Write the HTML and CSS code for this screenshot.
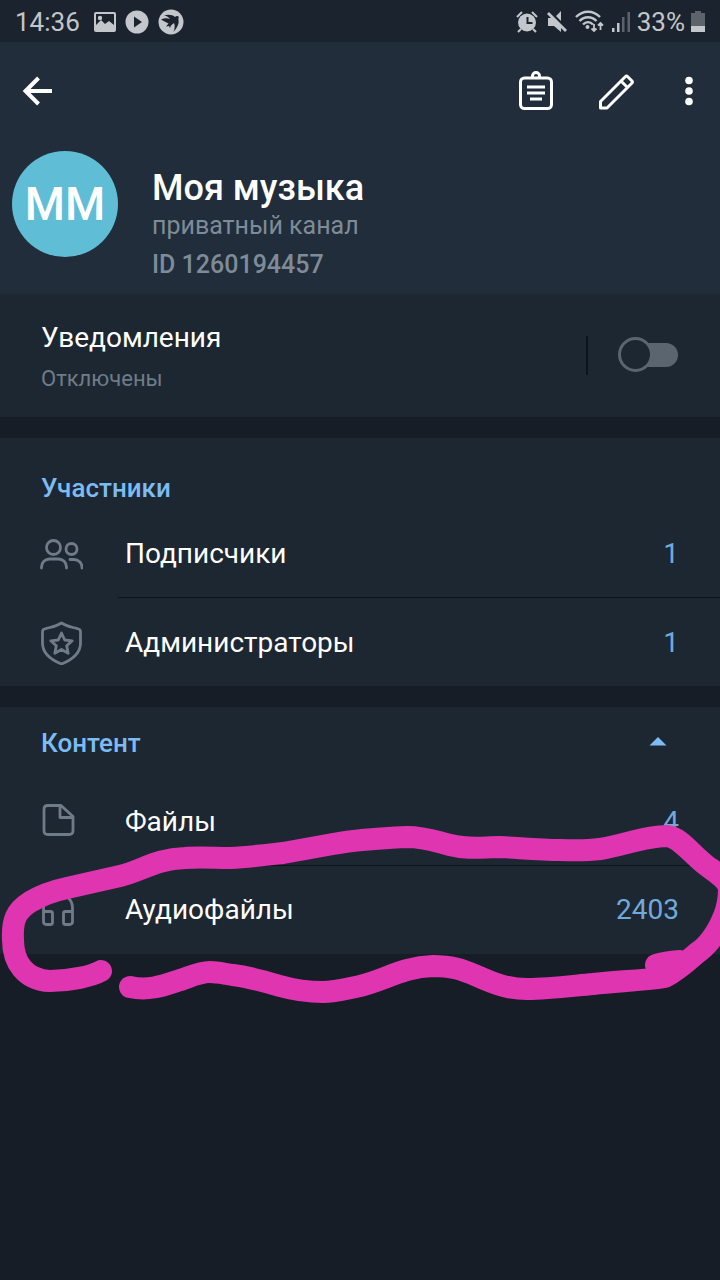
FILE: index.html
```html
<!DOCTYPE html>
<html lang="ru">
<head>
<meta charset="utf-8">
<meta name="viewport" content="width=device-width, initial-scale=1">
<title>Моя музыка</title>
<link rel="stylesheet" href="styles.css">
</head>
<body>
<div class="status">
  <span class="status-text">14:36</span>
  <svg class="status-photo" width="22" height="22" viewBox="0 0 22 22" aria-hidden="true"><rect x="1" y="2" width="20" height="18" rx="1" fill="none" stroke="currentColor" stroke-width="2"/><circle cx="6" cy="7" r="2.200" fill="currentColor"/><path d="M2 18v-4l5-5 4 4 4-3 5 4v5H2z" fill="currentColor"/></svg>
  <svg width="24" height="24" viewBox="0 0 24 24" aria-hidden="true"><path fill="currentColor" fill-rule="evenodd" d="M12 .5a11.500 11.500 0 1 1 0 23 11.500 11.500 0 0 1 0-23zM9 6.500v11l8-5.500z"/></svg>
  <svg width="26" height="26" viewBox="0 0 26 26" aria-hidden="true"><circle cx="13" cy="13" r="12.500" fill="currentColor"/><path class="cutout" d="M3 10.500C7 8.500 10 9 12 10C10.500 8 8 6.500 6 6.500C10 5 15 6 17 8Q19 6 21 8Q20 9 20.500 11C21.500 15 18 20 15.500 23C17 19 17 16 16 14L13 16.500L12 19L11 17L8 17.500L10.500 14.500C8 13 5 12 3 10.500z"/></svg>
  <span class="status-space"></span>
  <div class="status-right">
    <svg width="24" height="24" viewBox="0 0 24 24" aria-hidden="true"><circle cx="12" cy="12.500" r="9" fill="currentColor"/><path d="M2 7l5-5M22 7l-5-5M6 19l-3 3M18 19l3 3" stroke="currentColor" stroke-width="2"/><path class="cut-line" d="M12.500 7v6h5"/></svg>
    <svg width="24" height="24" viewBox="0 0 24 24" aria-hidden="true"><path fill="currentColor" d="M3 8h5l8 8v6l-7-6H3zM11 6l5-5v10z"/><path d="M3 3l18 18" stroke="currentColor" stroke-width="2.800"/></svg>
    <svg width="30" height="24" viewBox="0 0 30 24" aria-hidden="true"><g fill="none" stroke="currentColor" stroke-width="2.400"><path d="M1 7c7-7 17-7 24 0M4.500 11c5-5 12-5 17 0M8 14.500c3-3 7-3 10 0"/><path d="M19 14v7M16.500 18.500L19 21l2.500-2.500M25.500 20v-7M23 15.500l2.500-2.500 2.500 2.500" stroke-width="1.800"/></g><circle cx="12.500" cy="17" r="2" fill="currentColor"/></svg>
    <svg width="20" height="22" viewBox="0 0 20 22" aria-hidden="true"><path fill="currentColor" d="M1 17h2.500v4H1zM6 12h2.500v9H6z"/><path class="dim" d="M11 6h2.500v15H11zM16.500 1H19v20h-2.500z"/></svg>
    <span class="status-text">33%</span>
    <svg width="14" height="24" viewBox="0 0 14 24" aria-hidden="true"><path class="dim" d="M4 1h6v2h4v14H0V3h4z"/><path fill="currentColor" d="M0 16h14v6H0z"/></svg>
  </div>
</div>

<header class="header">
  <nav class="toolbar">
    <button class="tool" type="button" aria-label="Назад"><svg width="40" height="40" viewBox="0 0 40 40"><path d="M34 20H9M20.500 7L7.500 20l13 13" fill="none" stroke="currentColor" stroke-width="4"/></svg></button>
    <span class="status-space"></span>
    <button class="tool" type="button" aria-label="Журнал"><svg width="40" height="40" viewBox="0 0 40 40"><g fill="none" stroke="currentColor" stroke-width="3"><rect x="4.500" y="7" width="31" height="30.500" rx="4"/><path d="M16.500 7V5a3.500 3.500 0 0 1 7 0v2M11 16h18M11 22h18M14 28h12"/></g></svg></button>
    <button class="tool" type="button" aria-label="Изменить"><svg width="40" height="40" viewBox="0 0 40 40"><path d="M4.500 37v-6.500L29.500 5.500q1-1 2 0l4.500 4.500q1 1 0 2L11 37zM25 10l6.500 6.500" fill="none" stroke="currentColor" stroke-width="3" stroke-linejoin="round"/></svg></button>
    <button class="tool menu" type="button" aria-label="Меню"><svg width="10" height="40" viewBox="0 0 10 40"><g fill="currentColor"><circle cx="5" cy="9.500" r="3.800"/><circle cx="5" cy="20" r="3.800"/><circle cx="5" cy="30.500" r="3.800"/></g></svg></button>
  </nav>
  <div class="profile">
    <div class="avatar">ММ</div>
    <div class="who">
      <h1 class="name">Моя музыка</h1>
      <p class="kind">приватный канал</p>
      <p class="ident">ID 1260194457</p>
    </div>
  </div>
</header>

<main>
  <section class="card notify">
    <div class="notify-text">
      <label class="notify-title" for="notify">Уведомления</label>
      <p class="notify-state">Отключены</p>
    </div>
    <div class="toggle">
      <input class="switch" type="checkbox" role="switch" id="notify">
    </div>
  </section>

  <section class="card">
    <h2 class="heading heading-members">Участники</h2>
    <a class="row" href="#subscribers">
      <svg class="row-icon" width="44" height="44" viewBox="0 0 44 44" aria-hidden="true"><g fill="none" stroke="currentColor" stroke-width="2.800" stroke-linecap="round"><circle cx="14.500" cy="16.500" r="7"/><circle cx="32.500" cy="18" r="5.500"/><path d="M2.500 37v-1a8 8 0 0 1 8-8h9a8 8 0 0 1 8 8v1M31 28.500h4a8 8 0 0 1 8 8v.5"/></g></svg>
      <span class="row-body"><span>Подписчики</span><span class="count">1</span></span>
    </a>
    <a class="row" href="#admins">
      <svg class="row-icon" width="44" height="46" viewBox="0 0 44 46" aria-hidden="true"><g fill="none" stroke="currentColor" stroke-width="2.800" stroke-linejoin="round"><path d="M22.500 4c6 4 11 4 17 6q2 .5 2 3v11c0 10-9 17-19 21-10-4-19-11-19-21V13q0-2.500 2-3c6-2 11-2 17-6z"/><path d="M22.500 14l3.200 7 7.500.8-5.500 5 1.500 7.500-6.700-3.800-6.700 3.800 1.500-7.500-5.500-5 7.500-.8z"/></g></svg>
      <span class="row-body"><span>Администраторы</span><span class="count">1</span></span>
    </a>
  </section>

  <section class="card content">
    <button class="fold" type="button" aria-expanded="true"><span class="heading">Контент</span><svg class="caret" width="18" height="10" viewBox="0 0 18 10" aria-hidden="true"><path fill="currentColor" d="M.500 9.500h17L9 1z"/></svg></button>
    <a class="row" href="#files">
      <svg class="row-icon" width="44" height="44" viewBox="0 0 44 44" aria-hidden="true"><path d="M9 6.500h13L34 17.500v14q0 4-4 4H9q-4 0-4-4v-21q0-4 4-4zM21 6.500v12h13" fill="none" stroke="currentColor" stroke-width="2.800" stroke-linejoin="round"/></svg>
      <span class="row-body"><span>Файлы</span><span class="count">4</span></span>
    </a>
    <a class="row" href="#audio">
      <svg class="row-icon" width="44" height="44" viewBox="0 0 44 44" aria-hidden="true"><path d="M4.500 25v-4a14.500 14.500 0 0 1 29 0v4M4.500 24.500h7q2 0 2 2v9q0 2-2 2h-4q-3 0-3-3zM33.500 24.500h-7q-2 0-2 2v9q0 2 2 2h4q3 0 3-3z" fill="none" stroke="currentColor" stroke-width="2.800"/></svg>
      <span class="row-body"><span>Аудиофайлы</span><span class="count">2403</span></span>
    </a>
    <svg class="marker" viewBox="0 820 720 190" preserveAspectRatio="none" aria-hidden="true"><path d="M101 971C92 976 70 981 50 981C25 980 13 962 13 940C12 920 16 911 30 902C40 896 53 891 67 888L120 876C142 871 155 859 185 858C200 857 215 858 230 858C250 857 266 855 283 853L333 844Q360 839 407 837C424 837 434 841 450 845C470 850 483 847 500 847C520 848 540 850 560 850Q585 851 600 849C622 846 645 836 667 836C680 837 692 855 707 866C718 874 728 880 729 889C729 898 728 906 724 916C715 938 706 947 697 953C688 961 677 971 665 977C641 981 617 981 593 984C571 986 549 989 527 989C508 989 495 984 477 976C461 969 451 966 433 966C403 967 385 980 360 986C345 989 336 992 323 992C308 992 294 990 280 986C263 981 250 977 233 975C225 974 218 972 210 972C198 972 188 978 177 981C162 986 148 991 130 987M656 965Q665 962 680 961"/></svg>
  </section>
</main>
</body>
</html>
```
FILE: styles.css
```css
* {
  box-sizing: border-box;
}

body {
  margin: 0;
  min-height: 100vh;
  overflow-x: hidden;
  background: #161d26;
  color: #fff;
  font-family: Roboto, "Noto Sans", sans-serif;
  font-size: 28px;
}

h1, h2, p {
  margin: 0;
}

svg {
  display: block;
  flex: none;
}

button {
  padding: 0;
  border: 0;
  background: none;
  color: inherit;
  font: inherit;
}

.status {
  display: flex;
  align-items: center;
  gap: 9px;
  height: 42px;
  padding: 2px 15px 0 15px;
  background: #1b242e;
  color: #c3c6ca;
}

.status-right {
  display: flex;
  align-items: center;
  gap: 6px;
}

.status-text {
  font-size: 26px;
}

.status-photo {
  margin-left: 5px;
}

.status-space {
  flex: 1;
}

.cutout {
  fill: #1b242e;
}

.cut-line {
  fill: none;
  stroke: #1b242e;
  stroke-width: 2;
}

.dim {
  fill: #5c636b;
}

.header {
  background: #212d3a;
  padding-bottom: 8px;
}

.toolbar {
  display: flex;
  align-items: center;
  gap: 40px;
  height: 98px;
  padding: 0 26px 0 18px;
}

.menu {
  margin-left: 8px;
}

.profile {
  display: flex;
  align-items: flex-start;
  gap: 34px;
  padding: 11px 12px 0;
}

.avatar {
  display: grid;
  place-items: center;
  width: 106px;
  height: 106px;
  border-radius: 50%;
  background: #60bdd6;
  font-size: 46px;
  font-weight: 500;
}

.who {
  padding-top: 16px;
}

.name {
  font-size: 36px;
  font-weight: 500;
  line-height: 42px;
}

.kind {
  color: #7e8b98;
  font-size: 25px;
  line-height: 34px;
}

.ident {
  color: #7e8b98;
  font-size: 25px;
  font-weight: 500;
  line-height: 43px;
}

.card {
  margin-bottom: 21px;
  background: #1d2732;
}

.notify {
  display: flex;
  padding: 22px 42px 19px 41px;
}

.notify-text {
  flex: 1;
}

.notify-title {
  display: block;
  line-height: 44px;
}

.notify-state {
  color: #6f7c88;
  font-size: 22px;
  line-height: 38px;
}

.toggle {
  align-self: flex-start;
  margin-top: 20px;
  padding: 1px 0 3px 30px;
  border-left: 2px solid #0c131b;
}

.switch {
  display: grid;
  align-items: center;
  appearance: none;
  width: 60px;
  height: 35px;
  margin: 0;
}

.switch::before,
.switch::after {
  content: "";
  box-sizing: border-box;
  grid-area: 1 / 1;
}

.switch::before {
  justify-self: end;
  width: 48px;
  height: 24px;
  border-radius: 12px;
  background: #5b6570;
}

.switch::after {
  width: 35px;
  height: 35px;
  border: 3px solid #5b6570;
  border-radius: 50%;
  background: #1d2732;
}

.heading {
  color: #7cbcf3;
  font-size: 26px;
  font-weight: 500;
  line-height: 30px;
}

.heading-members {
  padding: 35px 41px 6px;
}

.row {
  display: flex;
  align-items: stretch;
  height: 88px;
  padding-left: 39px;
  color: inherit;
  text-decoration: none;
}

.row:last-child {
  height: 89px;
}

.row-icon {
  align-self: center;
  margin-right: 35px;
  color: #6f7c88;
}

.row-body {
  display: flex;
  flex: 1;
  align-items: center;
  justify-content: space-between;
  padding: 0 41px 0 7px;
}

.row + .row .row-body {
  border-top: 1px solid #0c131b;
}

.count {
  color: #70aadc;
}

.content {
  position: relative;
  padding-bottom: 1px;
}

.fold {
  display: flex;
  align-items: center;
  justify-content: space-between;
  width: 100%;
  height: 70px;
  padding: 2px 53px 0 41px;
  color: #7cbcf3;
}

.caret {
  margin-bottom: 4px;
}

.marker {
  position: absolute;
  top: 113px;
  left: 0;
  width: 100%;
  height: 190px;
  fill: none;
  stroke: #df35b0;
  stroke-width: 22;
  stroke-linecap: round;
  stroke-linejoin: round;
  pointer-events: none;
}
```
